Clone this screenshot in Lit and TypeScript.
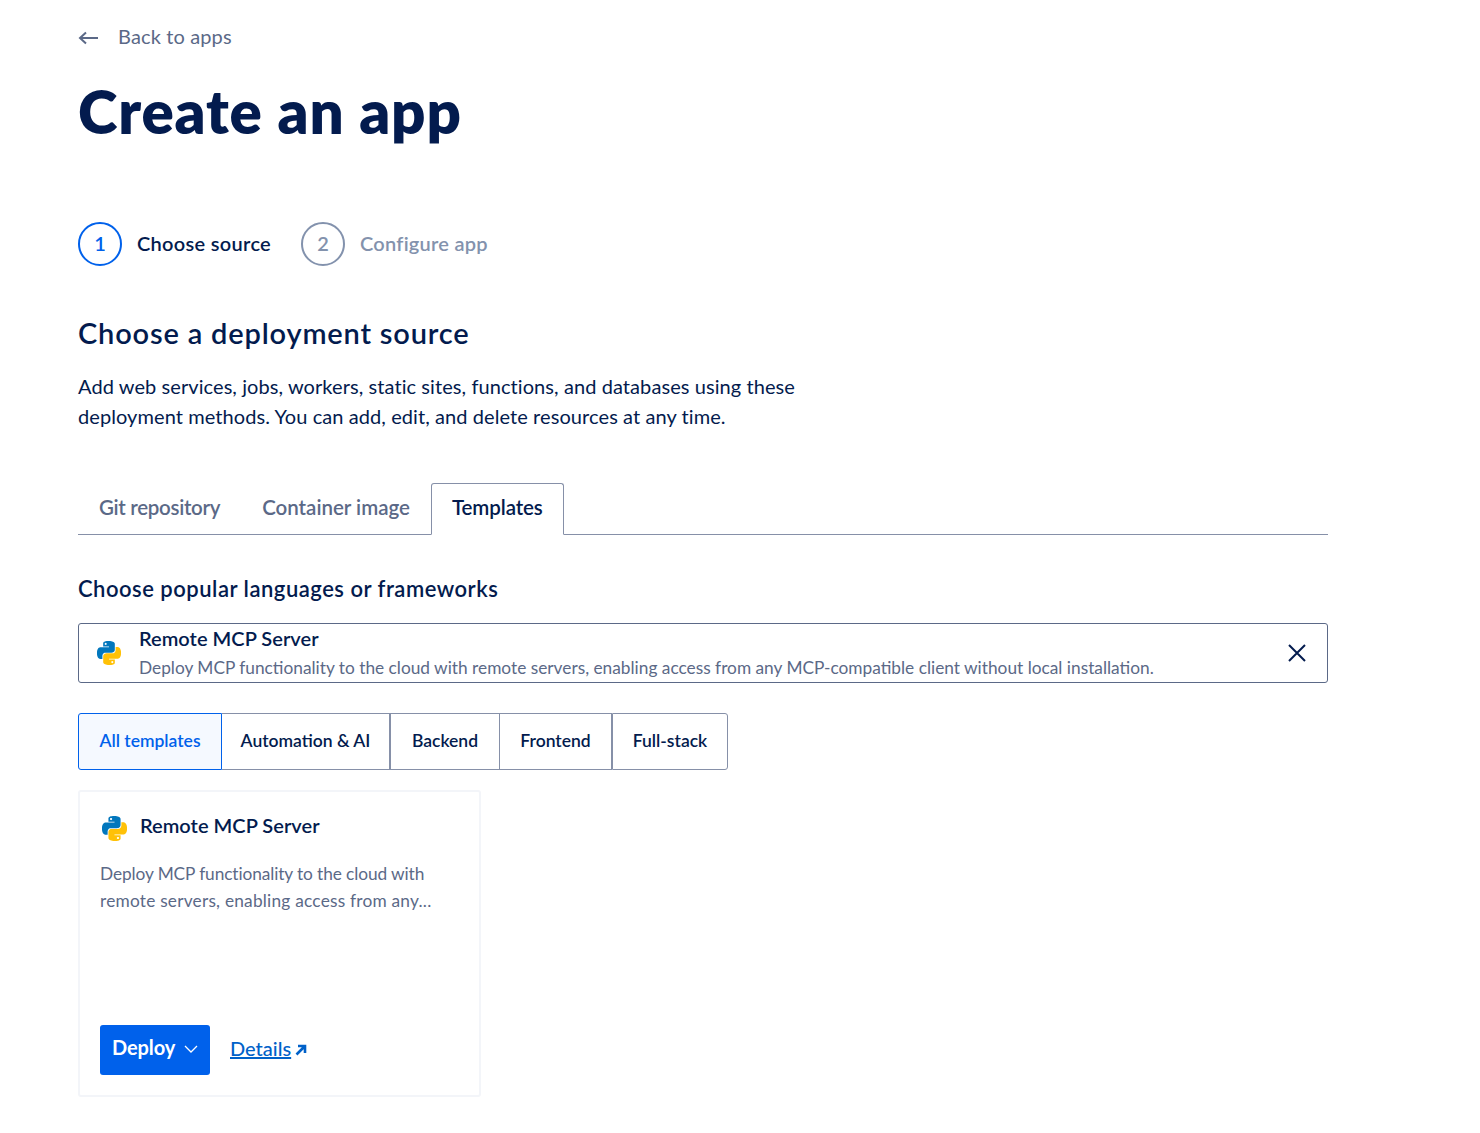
import { LitElement, html, css, svg } from "lit";
import { customElement } from "lit/decorators.js";

const python = svg`<path fill="#0277bd" d="M14.25.18l.9.2.73.26.59.3.45.32.34.34.25.34.16.33.1.3.04.26.02.2-.01.13V8.5l-.05.63-.13.55-.21.46-.26.38-.3.31-.33.25-.35.19-.35.14-.33.1-.3.07-.26.04-.21.02H8.77l-.69.05-.59.14-.5.22-.41.27-.33.32-.27.35-.2.36-.15.37-.1.35-.07.32-.04.27-.02.21v3.06H3.17l-.21-.03-.28-.07-.32-.12-.35-.18-.36-.26-.36-.36-.35-.46-.32-.59-.28-.73-.21-.88-.14-1.05-.05-1.23.06-1.22.16-1.04.24-.87.32-.71.36-.57.4-.44.42-.33.42-.24.4-.16.36-.1.32-.05.24-.01h.16l.06.01h8.16v-.83H6.18l-.01-2.75-.02-.37.05-.34.11-.31.17-.28.25-.26.31-.23.38-.2.44-.18.51-.15.58-.12.64-.1.71-.06.77-.04.84-.02 1.27.05zm-6.3 1.98l-.23.33-.08.41.08.41.23.34.33.22.41.09.41-.09.33-.22.23-.34.08-.41-.08-.41-.23-.33-.33-.22-.41-.09-.41.09z"/><path fill="#ffc107" d="M21.04 6.11l.28.06.32.12.35.18.36.27.36.35.35.47.32.59.28.73.21.88.14 1.04.05 1.23-.06 1.23-.16 1.04-.24.86-.32.71-.36.57-.4.45-.42.33-.42.24-.4.16-.36.09-.32.05-.24.02-.16-.01h-8.22v.82h5.84l.01 2.76.02.36-.05.34-.11.31-.17.29-.25.25-.31.24-.38.2-.44.17-.51.15-.58.13-.64.09-.71.07-.77.04-.84.01-1.27-.04-1.07-.14-.9-.2-.73-.25-.59-.3-.45-.33-.34-.34-.25-.34-.16-.33-.1-.3-.04-.25-.02-.2.01-.13v-5.34l.05-.64.13-.54.21-.46.26-.38.3-.32.33-.24.35-.2.35-.14.33-.1.3-.06.26-.04.21-.02.13-.01h5.84l.69-.05.59-.14.5-.21.41-.28.33-.32.27-.35.2-.36.15-.36.1-.35.07-.32.04-.28.02-.21V6.07h2.09l.14.01zm-6.47 14.25l-.23.33-.08.41.08.41.23.33.33.23.41.08.41-.08.33-.23.23-.33.08-.41-.08-.41-.23-.33-.33-.23-.41-.08-.41.08z"/>`;

@customElement("app-root")
export class AppRoot extends LitElement {
  static styles = css`
    :host {
      display: block;
      font-family: "Lato", "Liberation Sans", sans-serif;
      color: #031b4e;
      background: #fff;
      min-height: 1133px;
    }
    * { box-sizing: border-box; }
    .page { width: 1328px; padding: 22px 0 36px 78px; }
    .back { display: flex; align-items: center; gap: 20px; height: 30px; color: #5b6987; font-size: 20px; letter-spacing: 0.13px; }
    .back span { padding-bottom: 2px; }
    .back svg { display: block; margin-top: 1px; }
    h1 { margin: 21px 0 0; font-size: 60px; line-height: 76px; font-weight: 800; color: #031b4e; letter-spacing: 0.85px; }
    .steps { display: flex; align-items: center; margin-top: 73px; height: 44px; }
    .circle { width: 44px; height: 44px; border-radius: 50%; border: 2px solid #0061eb; color: #0061eb; display: flex; align-items: center; justify-content: center; font-size: 20px; font-weight: 600; padding-bottom: 2px; }
    .circle.off { border-color: #8392ad; color: #8392ad; margin-left: 30px; }
    .label { margin-left: 15px; font-size: 20px; font-weight: 600; letter-spacing: 0.3px; padding-bottom: 2px; }
    .label.off { color: #8392ad; letter-spacing: 0.25px; }
    h2 { margin: 47px 0 0; font-size: 29px; line-height: 40px; font-weight: 600; letter-spacing: 0.82px; }
    .intro { margin: 18px 0 0; font-size: 20px; line-height: 30px; width: 760px; letter-spacing: 0.08px; }
    .tabs { display: flex; margin-top: 52px; height: 52px; border-bottom: 1px solid #8690a8; }
    .tab { padding: 0 21px 4px; display: flex; align-items: center; font-size: 20.5px; font-weight: 600; color: #5b6987; height: 52px; }
    .tab.git { letter-spacing: -0.3px; }
    .tab.on { color: #031b4e; border: 1px solid #8690a8; border-bottom: 1px solid #fff; border-radius: 3px 3px 0 0; padding: 0 20px 4px; letter-spacing: -0.1px; }
    h3 { margin: 39px 0 0; font-size: 22px; line-height: 30px; font-weight: 600; letter-spacing: 0.5px; }
    .selected { position: relative; display: flex; align-items: center; margin-top: 19px; height: 60px; border: 1px solid #5b6987; border-radius: 3px; padding-left: 18px; }
    .selected .py { width: 24px; height: 24px; flex: none; display: block; }
    .sel-text { margin-left: 18px; flex: 1; }
    .sel-title { font-size: 20px; line-height: 26px; font-weight: 600; letter-spacing: 0.03px; margin-top: 1px; }
    .sel-desc { font-size: 17.3px; line-height: 30px; color: #5b6987; margin-top: 2px; }
    .close { display: block; margin-right: 21px; }
    .filters { display: grid; grid-template-columns: 144px 168px 110px 112px 116px; width: 650px; margin-top: 30px; height: 57px; }
    .filter { display: flex; align-items: center; justify-content: center; padding-bottom: 2px; font-size: 17.5px; font-weight: 600; border: 1px solid #8690a8; border-left: 0; }
    .filter:last-child { border-radius: 0 3px 3px 0; }
    .filter.on { background: #f5f9ff; color: #0061eb; border: 1px solid #0061eb; border-radius: 3px 0 0 3px; }
    .filter.thick { border-left: 1px solid #8690a8; }
    .card { margin-top: 20px; width: 403px; height: 307px; border: 2px solid #f3f5f9; border-radius: 3px; padding: 20px; display: flex; flex-direction: column; }
    .card-head { display: flex; align-items: center; height: 30px; }
    .card-head svg { width: 25px; height: 25px; margin: 2px 0 0 2px; flex: none; display: block; }
    .card-title { margin: -4px 0 0 13px; font-size: 20px; font-weight: 600; letter-spacing: 0.03px; }
    .card-desc { margin: 18px 0 0; font-size: 17.3px; line-height: 27px; color: #5b6987; }
    .line-a { letter-spacing: -0.1px; }
    .line-b { letter-spacing: 0.22px; }
    .actions { margin-top: auto; display: flex; align-items: center; gap: 20px; }
    .deploy { width: 110px; height: 50px; background: #0061eb; color: #fff; border-radius: 3px; display: flex; align-items: center; padding: 0 0 7px 12px; gap: 10px; font-size: 20px; font-weight: 700; letter-spacing: -0.1px; }
    .deploy svg { margin-top: 5px; margin-left: -1px; }
    .details { display: flex; align-items: center; gap: 4px; color: #0061c9; font-size: 20px; font-weight: 500; padding-bottom: 5px; }
    .details span { text-decoration: underline; }
    .details svg { margin-top: 5px; }
  `;

  render() {
    return html`<div class="page">
      <div class="back">
        <svg width="20" height="14" viewBox="0 0 20 14" fill="none" stroke="#5b6987" stroke-width="2"><path d="M20 7H2M8 1.5 2 7l6 5.500"/></svg>
        <span>Back to apps</span>
      </div>
      <h1>Create an app</h1>
      <div class="steps">
        <div class="circle">1</div><div class="label">Choose source</div>
        <div class="circle off">2</div><div class="label off">Configure app</div>
      </div>
      <h2>Choose a deployment source</h2>
      <p class="intro">Add web services, jobs, workers, static sites, functions, and databases using these<br />deployment methods. You can add, edit, and delete resources at any time.</p>
      <div class="tabs">
        <div class="tab git">Git repository</div>
        <div class="tab">Container image</div>
        <div class="tab on">Templates</div>
      </div>
      <h3>Choose popular languages or frameworks</h3>
      <div class="selected">
        <svg class="py" viewBox="0 0 24 24">${python}</svg>
        <div class="sel-text">
          <div class="sel-title">Remote MCP Server</div>
          <div class="sel-desc">Deploy MCP functionality to the cloud with remote servers, enabling access from any MCP-compatible client without local installation.</div>
        </div>
        <svg class="close" width="18" height="18" viewBox="0 0 18 18" fill="none" stroke="#031b4e" stroke-width="2"><path d="M1 1l16 16M17 1 1 17"/></svg>
      </div>
      <div class="filters">
        <div class="filter on">All templates</div>
        <div class="filter">Automation &amp; AI</div>
        <div class="filter thick">Backend</div>
        <div class="filter">Frontend</div>
        <div class="filter thick">Full-stack</div>
      </div>
      <div class="card">
        <div class="card-head">
          <svg viewBox="0 0 24 24">${python}</svg>
          <div class="card-title">Remote MCP Server</div>
        </div>
        <p class="card-desc"><span class="line-a">Deploy MCP functionality to the cloud with</span><br /><span class="line-b">remote servers, enabling access from any...</span></p>
        <div class="actions">
          <div class="deploy">Deploy
            <svg width="14" height="8" viewBox="0 0 14 8" fill="none" stroke="#fff" stroke-width="1.300"><path d="M1 1l6 6 6-6"/></svg>
          </div>
          <div class="details"><span>Details</span>
            <svg width="12" height="12" viewBox="0 0 12 12" fill="none" stroke="#0061c9" stroke-width="2.600"><path d="M1.500 10.500 10 2M3 2h7v7"/></svg>
          </div>
        </div>
      </div>
    </div>`;
  }
}
